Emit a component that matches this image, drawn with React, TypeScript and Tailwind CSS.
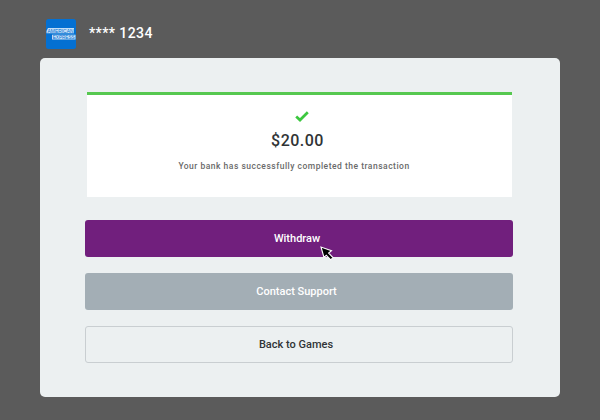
function AmexLogo() {
  return (
    <svg viewBox="0 0 30 30" className="w-[30px] h-[30px] shrink-0 overflow-visible">
      <rect width="30" height="30" rx="2.5" fill="#0470d2" />
      <path d="M2 9H28V14.3H0.5V12Z M6 15.8H29.5V20.6H6Z" fill="#c3def6" />
      <g
        fill="#0470d2"
        fontFamily="Liberation Sans, sans-serif"
        fontSize="5.6"
      >
        <text x="1.5" y="13.8" textLength="26" lengthAdjust="spacingAndGlyphs">AMERICAN</text>
        <text x="6.7" y="20.1" textLength="22" lengthAdjust="spacingAndGlyphs">EXPRESS</text>
      </g>
    </svg>
  )
}

function CheckIcon() {
  return (
    <svg viewBox="0 0 14 11" className="ml-[4px] w-[14px] h-[11px]" fill="none">
      <path d="M1.2 5.4 5 9 12.8 1.2" stroke="#3cc73f" strokeWidth="2.7" />
    </svg>
  )
}

function Cursor() {
  return (
    <svg viewBox="0 0 15 16" className="absolute left-[235px] top-[26px] w-[15px] h-[16px]">
      <path
        d="M1 1 4 11.5 6.3 9.2 10.8 13.8 13 11.6 8.6 7 11.5 4.7Z"
        fill="#000"
        stroke="#fff"
        strokeWidth="1.1"
      />
    </svg>
  )
}

export default function App() {
  const buttons = [
    { label: 'Withdraw', style: 'bg-[#711f7d] text-white pr-1', cursor: true },
    { label: 'Contact Support', style: 'bg-[#a3aeb5] text-white pr-[5px]' },
    { label: 'Back to Games', style: 'border border-[#c9ced1] text-[#303436] pr-1.5' },
  ]

  return (
    <div className="w-[600px] h-[420px] bg-[#5b5b5b] px-10 pt-[19px] font-['Roboto',sans-serif] overflow-hidden">
      {/* Card header */}
      <div className="flex items-center gap-[13px] h-[39px] pl-1.5 pb-[9px]">
        <AmexLogo />
        <span className="pb-0.5 text-white text-[14px] font-medium leading-5 tracking-[0.4px]">**** 1234</span>
      </div>

      <div className="h-[339px] rounded-[5px] bg-[#ecf0f1] pl-[45px] pr-[47px] pt-[34px]">
        {/* Transaction result */}
        <div className="ml-[2px] mr-[1px] h-[105px] bg-white border-t-[3px] border-[#56c850] flex flex-col items-center pt-4">
          <CheckIcon />
          <p className="mt-[9px] mr-[4px] text-[16px] leading-5 font-medium tracking-[0.5px] text-[#303436]">$20.00</p>
          <p className="mt-[9px] mr-[11px] text-[8.5px] leading-3 font-medium tracking-[0.5px] text-[#6a6a6a] whitespace-nowrap">
            Your bank has successfully completed the transaction
          </p>
        </div>

        <div className="mt-[23px] flex flex-col gap-4">
          {buttons.map((button) => (
            <button
              key={button.label}
              className={`relative h-[37px] rounded-[3px] pt-0.5 text-[11px] font-medium ${button.style}`}
            >
              {button.label}
              {button.cursor && <Cursor />}
            </button>
          ))}
        </div>
      </div>
    </div>
  )
}
